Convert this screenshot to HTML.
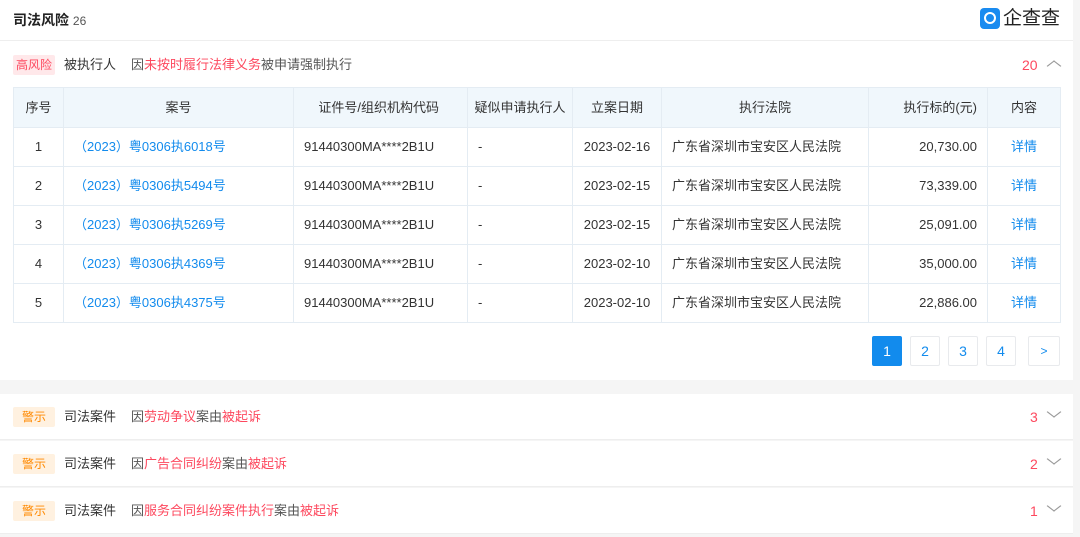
<!DOCTYPE html>
<html><head><meta charset="utf-8"><style>
*{margin:0;padding:0;box-sizing:border-box}
body{width:1080px;height:537px;background:#f5f5f5;font-family:"Liberation Sans","Noto Sans CJK SC",sans-serif;font-size:13px;line-height:20px;color:#333;position:relative;overflow:hidden}
.a{position:absolute}
.card{position:absolute;left:0;width:1073px;background:#fff}
table{position:absolute;left:13px;top:87px;width:1047px;border-collapse:collapse;table-layout:fixed}
td,th{border:1px solid #e4ecf3;height:39px;font-weight:normal;font-size:13px}
th{background:#f0f7fc;height:40px;color:#333}
td{color:#333}
.c{text-align:center}.r{text-align:right;padding-right:10px}.l{text-align:left;padding-left:10px}
.blue{color:#128bed}
.red{color:#fd485e}
.pg{position:absolute;top:336px;width:30px;height:30px;border:1px solid #e8eaed;border-radius:2px;text-align:center;line-height:28px;color:#128bed;font-size:14px}
.row{position:absolute;left:0;width:1073px;height:46px;background:#fff;border-bottom:1px solid #eee}
.tag{position:absolute;left:13px;top:13px;width:42px;height:20px;background:#fff1e0;color:#ff8900;font-size:12px;text-align:center;line-height:20px;border-radius:2px}
.rt{position:absolute;left:64px;top:13px}
.ds{position:absolute;left:131px;top:13px}
.n{position:absolute;left:1030px;top:13px;color:#fd485e;font-size:14px}
.chev{position:absolute;left:1050px;top:14px;width:8px;height:8px;border-right:1.5px solid #999;border-bottom:1.5px solid #999;transform:scaleX(1.3) rotate(45deg)}
</style></head><body>
<div class="card" style="top:0;height:380px">
<div class="a" style="left:13px;top:10px;font-size:14px;font-weight:bold;color:#222">司法风险 <span style="font-weight:normal;font-size:12px;color:#555">26</span></div>
<div class="a" style="left:980px;top:8px;width:20px;height:21px;background:#1a8bf0;border-radius:4px"><div class="a" style="left:4px;top:4px;width:12px;height:12px;border:2px solid #fff;border-radius:50%"></div></div>
<div class="a" style="left:1003px;top:7px;font-size:19px;line-height:24px;color:#222">企查查</div>
<div class="a" style="left:0;top:40px;width:1073px;height:1px;background:#eee"></div>
<div class="a" style="left:13px;top:55px;width:42px;height:20px;background:#ffe8ea;color:#fd485e;font-size:12px;text-align:center;line-height:20px;border-radius:2px">高风险</div>
<div class="a" style="left:64px;top:55px">被执行人</div>
<div class="a" style="left:131px;top:55px;color:#555">因<span class="red">未按时履行法律义务</span>被申请强制执行</div>
<div class="a red" style="left:1022px;top:55px;font-size:14px">20</div>
<div class="a" style="left:1050px;top:62px;width:8px;height:8px;border-left:1.5px solid #999;border-top:1.5px solid #999;transform:scaleX(1.3) rotate(45deg)"></div>
<table>
<colgroup><col style="width:50px"><col style="width:230px"><col style="width:174px"><col style="width:105px"><col style="width:89px"><col style="width:207px"><col style="width:119px"><col style="width:73px"></colgroup>
<tr><th>序号</th><th>案号</th><th style="text-align:right;padding-right:28px">证件号/组织机构代码</th><th>疑似申请执行人</th><th>立案日期</th><th>执行法院</th><th class="r">执行标的(元)</th><th>内容</th></tr>
<tr><td class="c">1</td><td class="l blue">（2023）粤0306执6018号</td><td class="l">91440300MA****2B1U</td><td class="l">-</td><td class="c">2023-02-16</td><td class="l">广东省深圳市宝安区人民法院</td><td class="r">20,730.00</td><td class="c blue">详情</td></tr>
<tr><td class="c">2</td><td class="l blue">（2023）粤0306执5494号</td><td class="l">91440300MA****2B1U</td><td class="l">-</td><td class="c">2023-02-15</td><td class="l">广东省深圳市宝安区人民法院</td><td class="r">73,339.00</td><td class="c blue">详情</td></tr>
<tr><td class="c">3</td><td class="l blue">（2023）粤0306执5269号</td><td class="l">91440300MA****2B1U</td><td class="l">-</td><td class="c">2023-02-15</td><td class="l">广东省深圳市宝安区人民法院</td><td class="r">25,091.00</td><td class="c blue">详情</td></tr>
<tr><td class="c">4</td><td class="l blue">（2023）粤0306执4369号</td><td class="l">91440300MA****2B1U</td><td class="l">-</td><td class="c">2023-02-10</td><td class="l">广东省深圳市宝安区人民法院</td><td class="r">35,000.00</td><td class="c blue">详情</td></tr>
<tr><td class="c">5</td><td class="l blue">（2023）粤0306执4375号</td><td class="l">91440300MA****2B1U</td><td class="l">-</td><td class="c">2023-02-10</td><td class="l">广东省深圳市宝安区人民法院</td><td class="r">22,886.00</td><td class="c blue">详情</td></tr>
</table>
<div class="pg" style="left:872px;background:#128bed;border-color:#128bed;color:#fff">1</div>
<div class="pg" style="left:910px">2</div>
<div class="pg" style="left:948px">3</div>
<div class="pg" style="left:986px">4</div>
<div class="pg" style="left:1028px;width:32px;font-size:12px">&gt;</div>
</div>
<div class="row" style="top:394px"><div class="tag">警示</div><div class="rt">司法案件</div><div class="ds" style="color:#555">因<span class="red">劳动争议</span>案由<span class="red">被起诉</span></div><div class="n">3</div><div class="chev"></div></div>
<div class="row" style="top:441px"><div class="tag">警示</div><div class="rt">司法案件</div><div class="ds" style="color:#555">因<span class="red">广告合同纠纷</span>案由<span class="red">被起诉</span></div><div class="n">2</div><div class="chev"></div></div>
<div class="row" style="top:488px"><div class="tag">警示</div><div class="rt">司法案件</div><div class="ds" style="color:#555">因<span class="red">服务合同纠纷案件执行</span>案由<span class="red">被起诉</span></div><div class="n">1</div><div class="chev"></div></div>
</body></html>
